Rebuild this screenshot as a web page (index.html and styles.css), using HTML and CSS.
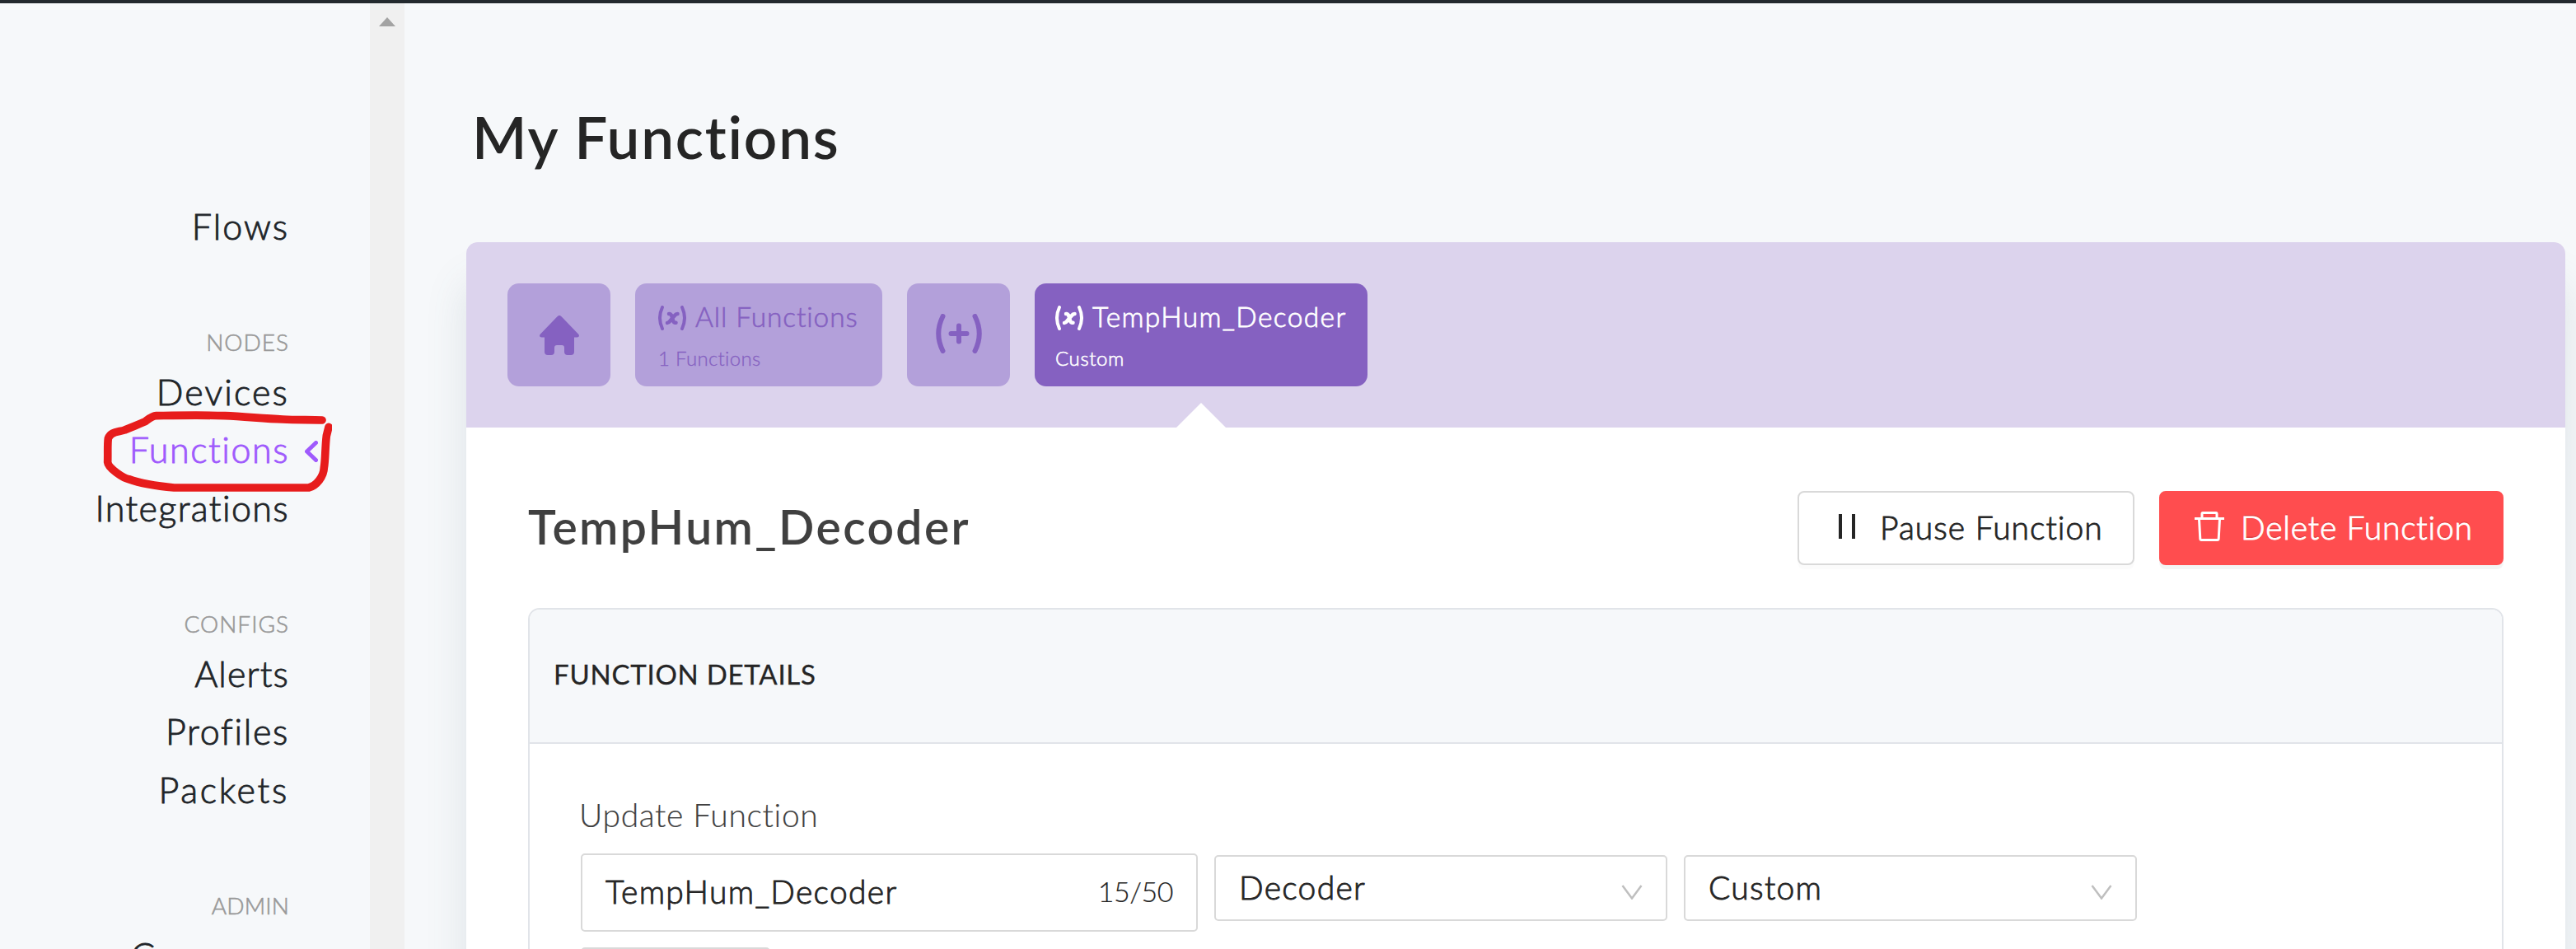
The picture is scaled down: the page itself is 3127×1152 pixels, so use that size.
FILE: index.html
```html
<!DOCTYPE html>
<html lang="en">
<head>
<meta charset="utf-8">
<title>My Functions</title>
<link rel="stylesheet" href="styles.css">
</head>
<body>
<div class="app">
  <nav class="sidebar">
    <ul class="nav-group">
      <li class="nav-item flows">Flows</li>
    </ul>
    <ul class="nav-group">
      <li class="nav-head">NODES</li>
      <li class="nav-item devices">Devices</li>
      <li class="nav-item active">Functions
        <svg class="nav-caret" viewBox="0 0 16 26"><path d="M13.500 2.500 2.500 13l11 10.500" fill="none" stroke="currentColor" stroke-width="5" stroke-linecap="round" stroke-linejoin="round"/></svg>
        <svg class="annotation" viewBox="0 0 840 300"><path d="M804 33C760 31 710 33 660 30 590 27 520 20 450 17 360 14 270 16 200 17 184 18 172 29 160 38 136 49 115 56 85 69 60 77 33 75 25 100 22 120 24 160 23 186 25 208 80 244 100 248 150 266 200 273 265 279L755 279C784 272 810 238 811 206 816 180 815 130 820 90L828 58" fill="none" stroke="#e71c1c" stroke-width="29" stroke-linecap="round" stroke-linejoin="round"/></svg>
      </li>
      <li class="nav-item integrations">Integrations</li>
    </ul>
    <ul class="nav-group">
      <li class="nav-head">CONFIGS</li>
      <li class="nav-item alerts">Alerts</li>
      <li class="nav-item profiles">Profiles</li>
      <li class="nav-item packets">Packets</li>
    </ul>
    <ul class="nav-group">
      <li class="nav-head admin">ADMIN</li>
      <li class="nav-item company">Company</li>
    </ul>
  </nav>
  <div class="scrollbar"><svg viewBox="0 0 20 11"><path d="M0 11 10 0l10 11z" fill="#a3a3a3"/></svg></div>
  <main class="main">
    <h1 class="page-title">My Functions</h1>
    <section class="card">
      <div class="toolbar">
        <div class="tile square"><svg class="home" viewBox="0 0 48 48"><path d="M21.500 1.200a3.500 3.500 0 0 1 5 0L47 22.500c2 2.300.5 4-1.500 4H42V44a4 4 0 0 1-4 4h-4a4 4 0 0 1-4-4v-5c0-2-1-3-3-3h-6c-2 0-3 1-3 3v5a4 4 0 0 1-4 4h-4a4 4 0 0 1-4-4V26.500H2.500c-2 0-3.500-1.700-1.500-4z" fill="currentColor"/></svg></div>
        <div class="tile all">
          <div class="tile-title"><svg class="fx" viewBox="0 0 34 30"><g fill="none" stroke="currentColor" stroke-width="4" stroke-linecap="round"><path d="M5 2Q-1 15 5 28M29 2Q35 15 29 28"/><path d="M13 10h.5q2 0 3 3l1.500 5q1 3 3 2.800h.5M23.500 10q-2 0-4 2.500l-5 6q-2 2.500-3.500 2.500" stroke-width="4.500"/></g></svg><span>All Functions</span></div>
          <div class="tile-sub">1 Functions</div>
        </div>
        <div class="tile square"><svg class="plus" viewBox="0 0 56 48"><path d="M8.500 3Q-2 24 8.500 45M47.500 3Q58 24 47.500 45M18.500 24h19M28 14.500v19" fill="none" stroke="currentColor" stroke-width="6" stroke-linecap="round"/></svg></div>
        <div class="tile current">
          <div class="tile-title"><svg class="fx" viewBox="0 0 34 30"><g fill="none" stroke="currentColor" stroke-width="4" stroke-linecap="round"><path d="M5 2Q-1 15 5 28M29 2Q35 15 29 28"/><path d="M13 10h.5q2 0 3 3l1.500 5q1 3 3 2.800h.5M23.500 10q-2 0-4 2.500l-5 6q-2 2.500-3.500 2.500" stroke-width="4.500"/></g></svg><span>TempHum_Decoder</span></div>
          <div class="tile-sub">Custom</div>
        </div>
      </div>
      <div class="content">
        <header class="content-head">
          <h2 class="name">TempHum_Decoder</h2>
          <button class="btn pause"><svg viewBox="0 0 20 30"><path d="M2 0v30M18 0v30" stroke="currentColor" stroke-width="4"/></svg><span>Pause Function</span></button>
          <button class="btn delete"><svg viewBox="0 0 36 36"><path d="M0 8.500h36M9 8V2.500q0-1 1-1h16q1 0 1 1V8M5.500 9l1.300 24q.1 1.500 1.500 1.500h19.400q1.400 0 1.500-1.500L30.500 9" fill="none" stroke="currentColor" stroke-width="3"/></svg><span>Delete Function</span></button>
        </header>
        <section class="panel">
          <div class="panel-head">FUNCTION DETAILS</div>
          <div class="panel-body">
            <div class="label">Update Function</div>
            <div class="row">
              <div class="field input"><span>TempHum_Decoder</span><span class="count">15/50</span></div>
              <div class="field select"><span>Decoder</span><svg viewBox="0 0 26 18"><path d="M1.500 1 13 16.500 24.500 1" fill="none" stroke="currentColor" stroke-width="2.500"/></svg></div>
              <div class="field select"><span>Custom</span><svg viewBox="0 0 26 18"><path d="M1.500 1 13 16.500 24.500 1" fill="none" stroke="currentColor" stroke-width="2.500"/></svg></div>
            </div>
            <div class="next"></div>
          </div>
        </section>
      </div>
    </section>
  </main>
</div>
</body>
</html>
```

FILE: styles.css
```css
* { box-sizing: border-box; margin: 0; padding: 0; }
body {
  height: 1152px;
  overflow: hidden;
  border-top: 4px solid #23292e;
  background: #f6f8fa;
  color: #212529;
  font-family: Lato, "Open Sans", sans-serif;
  font-weight: 300;
  -webkit-text-stroke: 0.9px currentColor;
}
svg { display: block; flex: none; }
.app { display: flex; height: 1148px; overflow: hidden; }

/* Sidebar */
.sidebar {
  display: flex;
  flex: none;
  flex-direction: column;
  gap: 79.5px;
  width: 449px;
  padding: 235.5px 98px 0 0;
}
.nav-group { list-style: none; text-align: right; }
.nav-item { position: relative; height: 70.5px; font-size: 43px; line-height: 70.5px; letter-spacing: 1.55px; }
.nav-head { height: 51px; font-size: 28px; line-height: 51px; letter-spacing: 1px; color: #999; -webkit-text-stroke-width: 0.6px; }
.flows { letter-spacing: 2px; }
.devices { letter-spacing: 2.15px; }
.integrations { letter-spacing: 1.4px; }
.alerts { letter-spacing: 1.1px; }
.profiles { letter-spacing: 1.7px; }
.packets { letter-spacing: 2.7px; }
.company { letter-spacing: 2.2px; }
.admin { letter-spacing: 0.15px; }
.active { color: #9f5afd; }
.nav-caret { position: absolute; right: -35px; top: 24px; width: 16px; height: 26px; }
.annotation { position: absolute; right: -52px; top: -12px; width: 280px; height: 100px; }

.scrollbar { flex: none; width: 42px; padding: 17px 11px; background: #f0f0f0; }
.scrollbar svg { width: 20px; height: 11px; }

/* Main column */
.main { flex: 1; padding: 120px 13px 0 75px; }
.page-title { margin: 0 0 86px 7px; font-size: 71px; font-weight: 600; line-height: 84px; letter-spacing: 1.8px; color: #252525; -webkit-text-stroke: 0; }
.card { height: 1200px; border-radius: 14px; background: #fff; box-shadow: 0 50px 50px rgba(80, 105, 120, 0.15); }

.toolbar { display: flex; gap: 30px; height: 225px; padding: 50px; border-radius: 14px 14px 0 0; background: #dcd3ed; }
.tile { flex: none; height: 125px; padding: 15px 0 0 25px; border-radius: 14px; background: #b3a0da; color: #8561c1; white-space: nowrap; }
.square { display: flex; align-items: center; justify-content: center; width: 125px; padding: 0; }
.all { width: 300px; }
.home { width: 48px; height: 48px; }
.plus { width: 56px; height: 48px; margin-top: -3px; }
.tile-title { display: flex; align-items: center; gap: 11px; height: 50px; margin-left: 3px; font-size: 33.5px; letter-spacing: 0.87px; -webkit-text-stroke-width: 0.6px; }
.fx { width: 34px; height: 30px; margin-top: 3px; }
.tile-sub { height: 48px; margin: 2px 0 0 3px; font-size: 24px; line-height: 48px; letter-spacing: 0.3px; -webkit-text-stroke-width: 0.3px; }
.current { position: relative; width: 404px; padding-left: 22px; background: #8561c1; color: #fff; }
.current .tile-title { letter-spacing: 1.4px; -webkit-text-stroke-width: 0.8px; }
.current .tile-sub { letter-spacing: 0.6px; -webkit-text-stroke-width: 0.6px; }
.current::after {
  content: "";
  position: absolute;
  left: 50%;
  bottom: -50px;
  border: 30px solid transparent;
  border-top: 0;
  border-bottom-color: #fff;
  transform: translateX(-50%);
}

.content { padding: 77px 75px 0; }
.content-head { display: flex; gap: 30px; height: 90px; }
.name { margin-right: auto; font-size: 57px; font-weight: 600; line-height: 86px; letter-spacing: 2.4px; color: #404040; -webkit-text-stroke: 0; }
.btn { display: flex; align-items: center; height: 90px; border: 2px solid #d9d9d9; border-radius: 8px; font: inherit; font-size: 39px; letter-spacing: 1px; white-space: nowrap; box-shadow: 0 5px 0 rgba(0, 0, 0, 0.016); -webkit-text-stroke: inherit; }
.btn span { margin-top: -3px; }
.pause { width: 409px; padding-left: 48px; background: #fff; color: #252525; }
.pause svg { width: 20px; height: 30px; margin: -4px 30px 0 0; }
.delete { width: 418px; padding-left: 41px; border-color: #ff4d4f; background: #ff4d4f; color: #fff; letter-spacing: 0.8px; box-shadow: 0 5px 0 rgba(0, 0, 0, 0.045); text-shadow: 0 -2px 0 rgba(0, 0, 0, 0.12); }
.delete svg { width: 36px; height: 36px; margin: -5px 20px 0 0; }

/* Details panel */
.panel { height: 900px; margin-top: 52px; border: 2px solid #e1e4e9; border-radius: 14px; }
.panel-head { height: 163px; padding-left: 29px; border-bottom: 2px solid #e1e4e9; border-radius: 12px 12px 0 0; background: #f6f8fa; font-size: 33px; font-weight: 400; line-height: 157px; letter-spacing: 0.75px; color: #252525; -webkit-text-stroke: 0.3px currentColor; }
.panel-body { padding: 56px 62px; }
.label { height: 61px; margin: 0 0 16px -2px; font-size: 39px; line-height: 61px; letter-spacing: 0.65px; color: #404040; -webkit-text-stroke: 0.2px currentColor; }
.row { display: flex; gap: 20px; height: 95px; }
.field { display: flex; align-items: center; justify-content: space-between; border: 2px solid #d9d9d9; border-radius: 5px; background: #fff; font-size: 39px; letter-spacing: 1.3px; color: #252525; }
.input { width: 749px; height: 95px; padding: 0 28px 4px; }
.count { font-size: 34px; letter-spacing: -0.5px; -webkit-text-stroke: 0.2px currentColor; }
.select { width: 550px; height: 80px; margin-top: 2px; padding: 0 28px 3px; }
.select svg { width: 26px; height: 18px; margin-top: 12px; color: #bfbfbf; }
.next { width: 230px; height: 60px; margin-top: 19px; border: 2px solid #d9d9d9; border-radius: 5px; }
```
